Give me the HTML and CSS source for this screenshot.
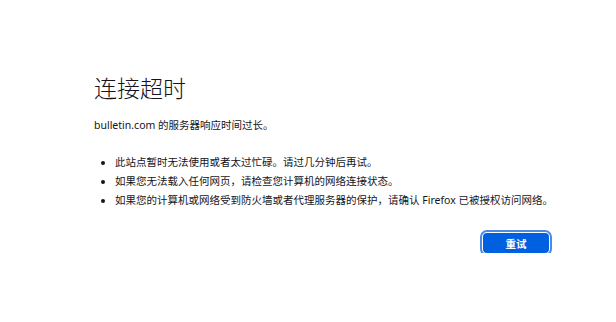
FILE: index.html
```html
<!DOCTYPE html>
<html lang="zh-CN">
<head>
<meta charset="utf-8">
<title>连接超时</title>
<link rel="stylesheet" href="styles.css">
</head>
<body>
<main class="error-page">
  <h1 class="title">连接超时</h1>
  <p class="desc">bulletin.com 的服务器响应时间过长。</p>
  <ul class="tips">
    <li>此站点暂时无法使用或者太过忙碌。请过几分钟后再试。</li>
    <li>如果您无法载入任何网页，请检查您计算机的网络连接状态。</li>
    <li>如果您的计算机或网络受到防火墙或者代理服务器的保护，请确认 Firefox 已被授权访问网络。</li>
  </ul>
  <div class="actions">
    <button class="retry">重试</button>
  </div>
</main>
</body>
</html>
```

FILE: styles.css
```css
html, body {
  margin: 0;
  background: #ffffff;
}
body {
  font-family: "Noto Sans", "Noto Sans CJK SC", sans-serif;
  color: #15141a;
  font-size: 10.5px;
}
.error-page {
  width: 457px;
  padding: 72px 0 0 94px;
}
.title {
  font-size: 23px;
  font-weight: 300;
  line-height: 32px;
  margin: 0 0 12px;
}
.desc {
  margin: 0 0 18px;
  line-height: 19px;
}
.tips {
  margin: 0 0 23px;
  padding-left: 21px;
  line-height: 19px;
}
.tips li {
  white-space: nowrap;
}
.actions {
  display: flex;
  justify-content: flex-end;
}
.retry {
  font-family: inherit;
  font-size: 10.5px;
  font-weight: 700;
  color: #ffffff;
  background: #0061e0;
  border: none;
  border-radius: 4px;
  width: 66px;
  height: 20px;
  margin-right: 2px;
  outline: 2px solid #4a8be8;
  outline-offset: 1px;
}
```
